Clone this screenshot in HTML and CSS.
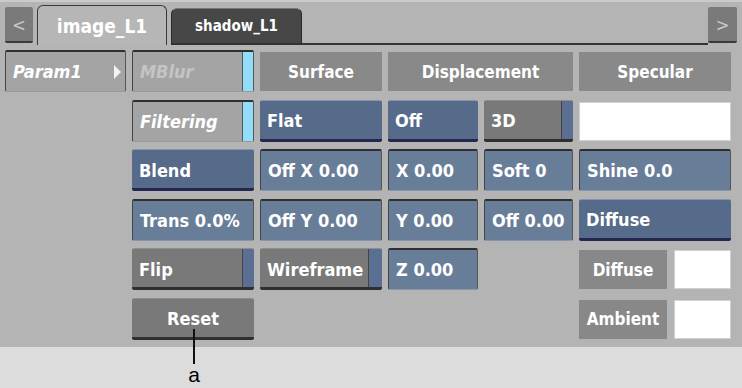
FILE: index.html
```html
<!DOCTYPE html>
<html lang="en">
<head>
  <meta charset="UTF-8">
  <title>Material Editor</title>
  <link rel="stylesheet" href="styles.css">
</head>
<body>
  <div class="panel">
    <div class="tabbar">
      <div class="nav">&lt;</div>
      <div class="tab active">image_L1</div>
      <div class="tab">shadow_L1</div>
      <div class="tabfill"></div>
      <div class="nav">&gt;</div>
    </div>

    <div class="grid">
      <!-- row 1 -->
      <div class="btn sunk grey c1 r1"><span class="lbl ital">Param1</span><span class="arrow"></span></div>
      <div class="btn sunk grey c2 r1"><span class="lbl ital dim">MBlur</span><span class="strip cyan"></span></div>
      <div class="head c3 r1">Surface</div>
      <div class="head c45 r1">Displacement</div>
      <div class="head c6 r1">Specular</div>

      <!-- row 2 -->
      <div class="btn sunk grey c2 r2"><span class="lbl ital">Filtering</span><span class="strip cyan"></span></div>
      <div class="btn raised blue c3 r2"><span class="lbl">Flat</span></div>
      <div class="btn raised blue c4 r2"><span class="lbl">Off</span></div>
      <div class="btn raised dark c5 r2"><span class="lbl">3D</span><span class="strip bluestrip"></span></div>
      <div class="swatch wide c6 r2"></div>

      <!-- row 3 -->
      <div class="btn raised blue c2 r3"><span class="lbl">Blend</span></div>
      <div class="btn sunk field c3 r3"><span class="lbl">Off X 0.00</span></div>
      <div class="btn sunk field c4 r3"><span class="lbl">X 0.00</span></div>
      <div class="btn sunk field c5 r3"><span class="lbl">Soft 0</span></div>
      <div class="btn sunk field c6 r3"><span class="lbl">Shine 0.0</span></div>

      <!-- row 4 -->
      <div class="btn sunk field c2 r4"><span class="lbl">Trans 0.0%</span></div>
      <div class="btn sunk field c3 r4"><span class="lbl">Off Y 0.00</span></div>
      <div class="btn sunk field c4 r4"><span class="lbl">Y 0.00</span></div>
      <div class="btn sunk field c5 r4"><span class="lbl">Off 0.00</span></div>
      <div class="btn raised blue c6 r4"><span class="lbl">Diffuse</span></div>

      <!-- row 5 -->
      <div class="btn raised dark c2 r5"><span class="lbl">Flip</span><span class="strip bluestrip"></span></div>
      <div class="btn raised dark c3 r5"><span class="lbl">Wireframe</span><span class="strip bluestrip"></span></div>
      <div class="btn sunk field c4 r5"><span class="lbl">Z 0.00</span></div>
      <div class="colour c6 r5">
        <div class="tag">Diffuse</div>
        <div class="swatch"></div>
      </div>

      <!-- row 6 -->
      <div class="btn raised dark c2 r6 center"><span class="lbl">Reset</span></div>
      <div class="colour c6 r6">
        <div class="tag">Ambient</div>
        <div class="swatch"></div>
      </div>
    </div>
  </div>

  <div class="callout">
    <div class="leader"></div>
    <div class="letter">a</div>
  </div>
</body>
</html>
```

FILE: styles.css
```css
* {
  box-sizing: border-box;
}
body {
  margin: 0;
  background: #dcdcdc;
  font-family: "DejaVu Sans Condensed", "DejaVu Sans", sans-serif;
  font-weight: bold;
  color: #fff;
  position: relative;
  height: 388px;
  overflow: hidden;
}
.panel {
  height: 347px;
  background: #b4b4b4;
  border-top: 2px solid #cbcbcb;
}

/* tabs */
.tabbar {
  display: flex;
  align-items: flex-end;
  height: 43px;
  padding: 0 5px;
}
.nav {
  align-self: flex-start;
  margin-top: 5px;
  width: 28px;
  height: 36px;
  background: #7a7a7a;
  border-bottom: 2px solid #3a3a3a;
  border-radius: 2px;
  color: #c9c9c9;
  font-weight: normal;
  font-size: 18px;
  display: flex;
  align-items: center;
  justify-content: center;
}
.nav:last-child {
  width: 29px;
}
.tab {
  margin-left: 4px;
  height: 37px;
  width: 131px;
  background: #474747;
  border: 1px solid #2a2a2a;
  border-bottom: 2px solid #333;
  border-top-color: #777;
  border-radius: 6px 6px 0 0;
  display: flex;
  align-items: center;
  justify-content: center;
  font-size: 15px;
}
.tab.active {
  width: 130px;
  height: 40px;
  background: #b6b6b6;
  border-color: #3a3a3a;
  border-bottom: none;
  font-size: 19px;
}
.tabfill {
  flex: 1;
  border-bottom: 2px solid #333;
  align-self: stretch;
}

/* grid of controls */
.grid {
  display: grid;
  grid-template-columns: 121px 122px 122px 90px 89px 152px;
  grid-template-rows: repeat(6, 42px);
  column-gap: 6px;
  row-gap: 7.5px;
  padding-left: 5px;
  margin-top: 5px;
  font-size: 18px;
}
.c1 { grid-column: 1; }
.c2 { grid-column: 2; }
.c3 { grid-column: 3; }
.c4 { grid-column: 4; }
.c5 { grid-column: 5; }
.c45 { grid-column: 4 / 6; }
.c6 { grid-column: 6; }
.r1 { grid-row: 1; }
.r2 { grid-row: 2; }
.r3 { grid-row: 3; }
.r4 { grid-row: 4; }
.r5 { grid-row: 5; }
.r6 { grid-row: 6; }

.btn {
  display: flex;
  align-items: stretch;
  border-radius: 2px;
  overflow: hidden;
}
.lbl {
  flex: 1;
  display: flex;
  align-items: center;
  padding-left: 7px;
  white-space: nowrap;
}
.center .lbl {
  justify-content: center;
  padding-left: 0;
}
.ital {
  font-style: italic;
}
.dim {
  color: #c4c4c4;
}

.sunk {
  border-top: 2px solid #2f2f2f;
  border-left: 1px solid #444;
  border-right: 1px solid #555;
  border-bottom: 1px solid #9a9a9a;
}
.grey {
  background: #a4a4a4;
}
.field {
  background: #687e98;
  border-bottom-color: #8597ad;
}
.raised {
  border-top: 1px solid #8595b0;
  border-bottom: 3px solid #24274e;
}
.raised .lbl {
  padding-top: 2px;
}
.blue {
  background: #566a89;
}
.dark {
  background: #797979;
  border-top-color: #8e8e8e;
  border-bottom-color: #2f2f2f;
}

.strip {
  width: 11px;
  flex: none;
}
.cyan {
  background: #92ddfa;
  border-left: 1px solid #555;
}
.bluestrip {
  width: 12px;
  background: #5a6f92;
  border-left: 1px solid #444;
}
.c3 .bluestrip {
  width: 14px;
}

.arrow {
  width: 0;
  height: 0;
  align-self: center;
  margin-right: 4px;
  border-top: 7px solid transparent;
  border-bottom: 7px solid transparent;
  border-left: 7px solid #f2f2f2;
}

.head {
  margin-top: 2px;
  height: 39px;
  background: #898989;
  display: flex;
  align-items: center;
  justify-content: center;
  font-size: 17px;
}

.swatch {
  background: #fff;
  border: 1px solid #d0d0d0;
  height: 39px;
}
.swatch.wide {
  margin-top: 2px;
}
.colour {
  display: flex;
  gap: 7px;
  padding-top: 2px;
}
.colour .swatch {
  width: 57px;
}
.tag {
  width: 88px;
  height: 39px;
  background: #888;
  display: flex;
  align-items: center;
  justify-content: center;
  font-size: 17px;
}

/* annotation */
.callout {
  position: absolute;
  left: 186px;
  top: 329px;
  width: 16px;
}
.leader {
  width: 2px;
  height: 35px;
  margin-left: 7px;
  background: #111;
}
.letter {
  font-family: "Liberation Sans", Arial, sans-serif;
  font-weight: normal;
  color: #000;
  font-size: 21px;
  line-height: 21px;
  text-align: center;
}
```
